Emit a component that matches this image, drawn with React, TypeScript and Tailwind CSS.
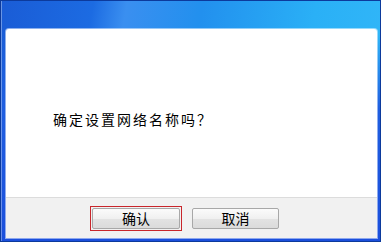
export default function App() {
  return (
    <div className="w-[381px] h-[242px] overflow-hidden bg-white">
      {/* Window frame */}
      <div className="h-full flex flex-col border border-[#0c3a9c] pt-[28px] pl-[5px] pr-[3px] pb-[3px] bg-[linear-gradient(180deg,rgba(0,0,0,0)_0%,rgba(0,0,0,0)_14%,#1f5ee0_45%,#1b4fdc_100%),linear-gradient(100deg,#1a5cd6_0%,#1c6be2_22%,#3a8ff0_30%,#2290ee_48%,#2ab0f6_75%,#33b8f8_100%)] shadow-[inset_1px_0_0_rgba(255,255,255,0.35)]">
        {/* Dialog body */}
        <div className="flex-1 flex flex-col bg-white rounded-t-[3px] overflow-hidden shadow-[0_0_0_1px_rgba(255,255,255,0.5)]">
          <div className="flex-1 pt-[80px] pl-[47px]">
            <p
              className="text-[14px] leading-[20px] tracking-[2px] text-black"
              style={{ fontFamily: '"Noto Sans CJK SC", "Noto Sans", sans-serif' }}
            >
              确定设置网络名称吗？
            </p>
          </div>

          {/* Footer with buttons */}
          <div className="h-[41px] shrink-0 flex items-center pl-[84px] gap-[10px] bg-[#f1f1f1] border-t border-[#dcdcdc]">
            <div className="border border-[#c8262b] p-px">
              <button
                className="w-[88px] h-[21px] flex items-center justify-center text-[14px] leading-none text-black border border-[#a8a8a8] rounded-[2px] bg-[linear-gradient(180deg,#fbfbfb_0%,#f0f0f0_50%,#e3e3e3_51%,#dbdbdb_100%)]"
                style={{ fontFamily: '"Noto Sans CJK SC", "Noto Sans", sans-serif' }}
              >
                确认
              </button>
            </div>
            <button
              className="w-[87px] h-[21px] flex items-center justify-center text-[14px] leading-none text-black border border-[#a8a8a8] rounded-[2px] bg-[linear-gradient(180deg,#fbfbfb_0%,#f0f0f0_50%,#e3e3e3_51%,#dbdbdb_100%)]"
              style={{ fontFamily: '"Noto Sans CJK SC", "Noto Sans", sans-serif' }}
            >
              取消
            </button>
          </div>
        </div>
      </div>
    </div>
  )
}
